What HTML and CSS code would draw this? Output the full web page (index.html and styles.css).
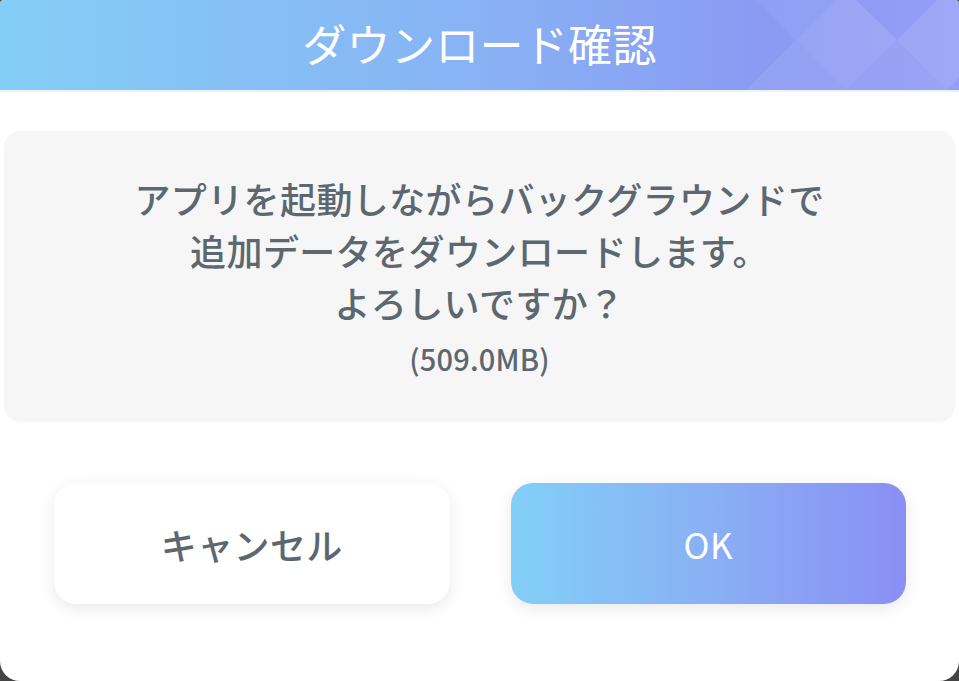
FILE: index.html
```html
<!DOCTYPE html>
<html lang="ja">
<head>
  <meta charset="UTF-8">
  <meta name="viewport" content="width=device-width, initial-scale=1.0">
  <title>ダウンロード確認</title>
  <link rel="stylesheet" href="styles.css">
</head>
<body>
  <div class="dialog">
    <!-- Title bar with the diamond pattern on the right -->
    <div class="dialog-header">
      <svg class="header-pattern" width="220" height="90" viewBox="0 0 220 90">
        <polygon points="57,40 107,-10 158,40 107,90" fill="#ffffff" fill-opacity="0.10"/>
        <polygon points="7,90 57,40 107,90" fill="#ffffff" fill-opacity="0.07"/>
        <polygon points="17,0 57,40 97,0" fill="#ffffff" fill-opacity="0.05"/>
        <polygon points="158,40 208,-10 258,40 208,90" fill="#ffffff" fill-opacity="0.10"/>
        <polygon points="107,90 158,40 208,90" fill="#ffffff" fill-opacity="0.06"/>
      </svg>
      <h1 class="dialog-title">ダウンロード確認</h1>
    </div>

    <div class="dialog-body">
      <div class="message-box">
        <p class="message">アプリを起動しながらバックグラウンドで<br>追加データをダウンロードします。<br>よろしいですか？</p>
        <p class="message-size">(509.0MB)</p>
      </div>

      <div class="button-row">
        <button class="btn btn-cancel">キャンセル</button>
        <button class="btn btn-ok">OK</button>
      </div>
    </div>
  </div>
</body>
</html>
```

FILE: styles.css
```css
html, body {
  margin: 0;
  padding: 0;
  height: 100%;
  background-color: #444444;
  font-family: "Noto Sans CJK JP", "Noto Sans", sans-serif;
}
.dialog {
  width: 959px;
  height: 681px;
  background: #ffffff;
  border-radius: 4px 4px 20px 20px;
  overflow: hidden;
  display: flex;
  flex-direction: column;
}
/* Gradient title bar */
.dialog-header {
  position: relative;
  height: 90px;
  flex-shrink: 0;
  background: linear-gradient(90deg, #84cef6 0%, #88b2f4 50%, #8a9af3 80%, #959ef5 100%);
  border-bottom: 2px solid #eaf2fc;
  display: flex;
  align-items: center;
  justify-content: center;
}
.header-pattern {
  position: absolute;
  right: 0;
  top: 0;
}
.dialog-title {
  position: relative;
  margin: 0;
  margin-top: -4px;
  color: #ffffff;
  font-size: 44px;
  font-weight: 400;
  letter-spacing: 0.3px;
}
.dialog-body {
  padding: 39px 4px 0 4px;
}
/* Grey message panel */
.message-box {
  height: 291px;
  background: #f6f6f6;
  border-radius: 16px;
  display: flex;
  flex-direction: column;
  align-items: center;
  justify-content: center;
  color: #5c6770;
  text-align: center;
}
.message {
  margin: 0;
  margin-top: -4px;
  font-size: 36px;
  line-height: 52px;
  font-weight: 500;
  letter-spacing: 0.4px;
}
.message-size {
  margin: 10px 0 0 0;
  font-size: 29px;
  line-height: 40px;
  font-weight: 500;
  letter-spacing: 0.2px;
}
/* Cancel / OK */
.button-row {
  display: flex;
  gap: 61px;
  margin-top: 61px;
  padding: 0 49px 0 50px;
}
.btn {
  flex: 1;
  height: 121px;
  border: none;
  border-radius: 22px;
  font-family: inherit;
  font-size: 36px;
  font-weight: 500;
  letter-spacing: 0.4px;
  cursor: pointer;
  box-shadow: 0 4px 16px rgba(0, 0, 0, 0.09);
}
.btn-cancel {
  background: #ffffff;
  color: #5c6770;
}
.btn-ok {
  background: linear-gradient(90deg, #82cff7 0%, #89b0f4 50%, #8a8ff4 100%);
  color: #ffffff;
  font-size: 35px;
  font-weight: 400;
}
```
